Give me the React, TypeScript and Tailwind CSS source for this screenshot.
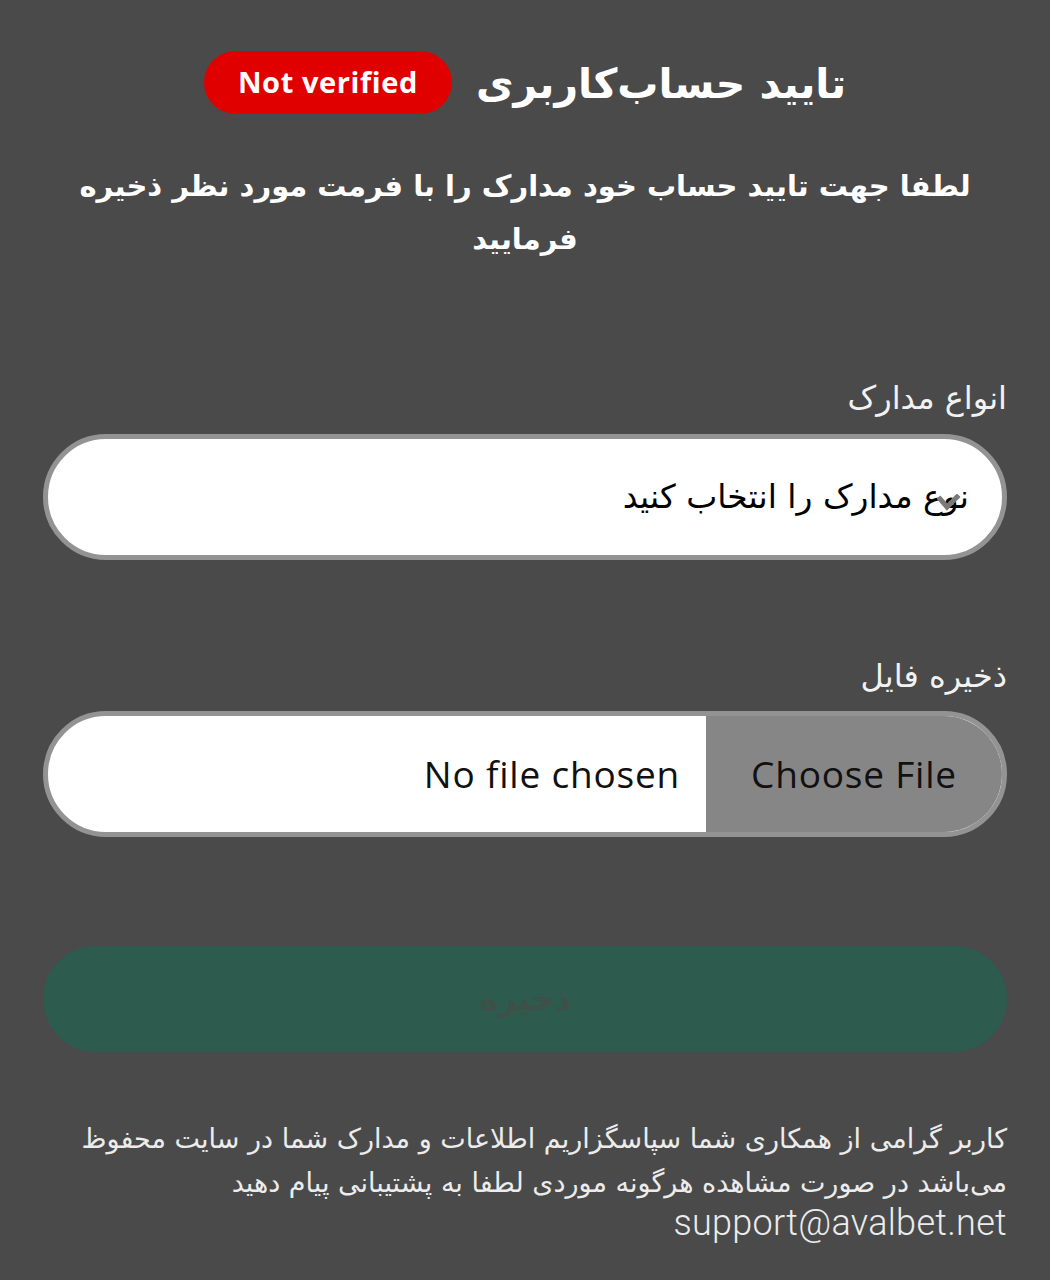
import React from "react";

const fa = { fontFamily: '"DejaVu Sans", "Noto Sans", sans-serif' };
const latin = { fontFamily: '"Open Sans", "DejaVu Sans", sans-serif' };

function Chevron() {
  return (
    <svg width="24" height="18" viewBox="0 0 24 18" className="absolute right-[46px] top-[60px]">
      <path d="M3 5 L10 13 L20 3" fill="none" stroke="#7a7a7a" strokeWidth="5" strokeLinecap="square" />
    </svg>
  );
}

export default function App() {
  return (
    <div dir="rtl" className="min-h-[1280px] bg-[#4a4a4a] px-[43px] pt-[49px] text-white" style={fa}>
      {/* header */}
      <div className="flex items-center justify-center gap-[24px]">
        <h1 className="pt-[4px] text-[41px] font-bold leading-[62px]">تایید حساب‌کاربری</h1>
        <span
          dir="ltr"
          className="flex h-[63px] items-center rounded-full bg-[#e00000] px-[34px] text-[29px] font-bold tracking-[0.6px] text-white"
          style={latin}
        >
          Not verified
        </span>
      </div>

      <p className="mx-auto mt-[45px] max-w-[900px] text-center text-[29px] font-bold leading-[53px]">
        لطفا جهت تایید حساب خود مدارک را با فرمت مورد نظر ذخیره فرمایید
      </p>

      {/* document type */}
      <label className="mt-[112px] block text-[32px] leading-[40px] text-[#f2f2f2]">انواع مدارک</label>
      <div className="relative mt-[16px]">
        <select
          className="h-[126px] w-full appearance-none rounded-full border-[5px] border-[#939393] bg-white pr-[33px] text-[33px] text-black outline-none"
          defaultValue=""
        >
          <option value="">نوع مدارک را انتخاب کنید</option>
        </select>
        <Chevron />
      </div>

      {/* file */}
      <label className="mt-[96px] block text-[32px] leading-[40px] text-[#f2f2f2]">ذخیره فایل</label>
      <div
        className="mt-[15px] flex h-[126px] overflow-hidden rounded-full border-[5px] border-[#939393] bg-white text-[37px] tracking-[0.8px] text-[#111]"
        style={latin}
      >
        <div className="flex w-[296px] items-center justify-center bg-[#868686]">Choose File</div>
        <div className="flex items-center pr-[26px]">No file chosen</div>
      </div>

      {/* save */}
      <button className="mt-[109px] h-[106px] w-full rounded-full bg-[#2d5b4e] text-[32px] font-bold text-[#3e5048]">
        ذخیره
      </button>

      {/* note */}
      <p className="mt-[65px] text-[27px] leading-[44px] text-[#ececec]">
        کاربر گرامی از همکاری شما سپاسگزاریم اطلاعات و مدارک شما در سایت محفوظ می‌باشد در صورت مشاهده هرگونه موردی لطفا به پشتیبانی پیام دهید
      </p>
      <div className="text-[36px] font-light leading-[36px] tracking-[0.3px] text-[#ececec]" style={{ fontFamily: "Roboto, sans-serif" }}>
        support@avalbet.net
      </div>
    </div>
  );
}
